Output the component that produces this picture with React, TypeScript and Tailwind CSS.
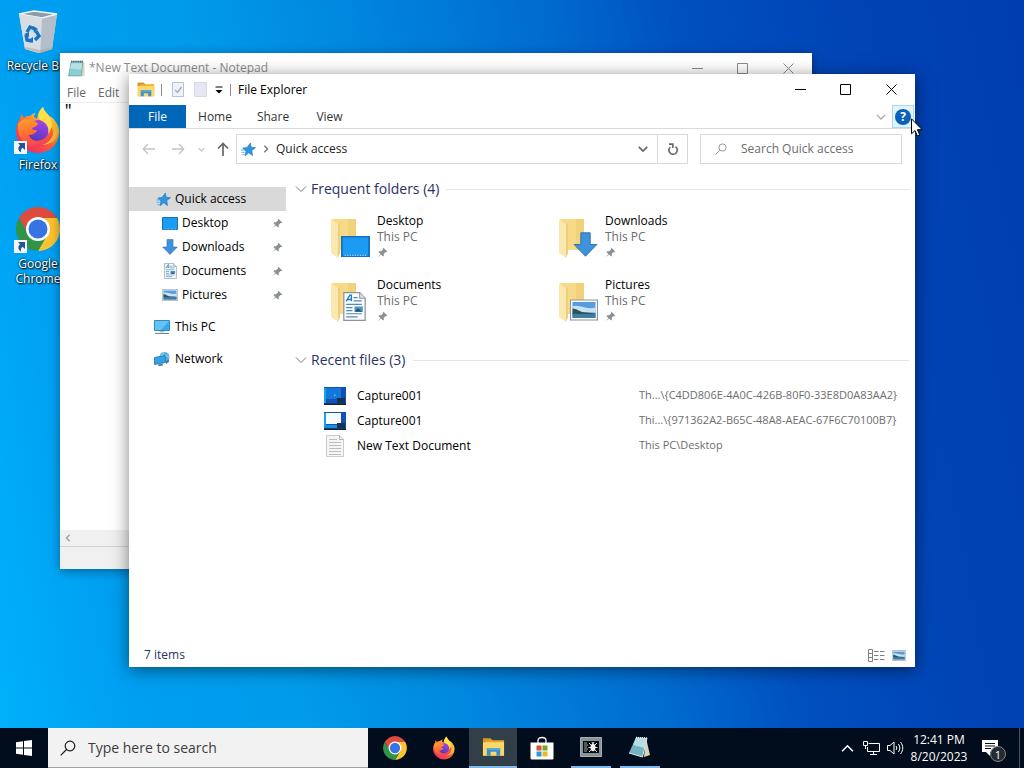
import type { ReactNode } from 'react'

type IconProps = { className?: string }

/* ---------- app icons ---------- */

function ChromeIcon({ className }: IconProps) {
  return (
    <svg viewBox="0 0 48 48" className={className} aria-hidden="true">
      <path d="M24 13H43.05A22 22 0 0 0 4.95 13L14.47 29.5A11 11 0 0 1 24 13Z" fill="#dd4b3e" />
      <path
        d="M24 13H43.05A22 22 0 0 0 4.95 13L14.47 29.5A11 11 0 0 1 24 13Z"
        fill="#fbc32d"
        transform="rotate(120 24 24)"
      />
      <path
        d="M24 13H43.05A22 22 0 0 0 4.95 13L14.47 29.5A11 11 0 0 1 24 13Z"
        fill="#2f9448"
        transform="rotate(240 24 24)"
      />
      <circle cx="24" cy="24" r="12" fill="#fff" />
      <circle cx="24" cy="24" r="9.5" fill="#3574e2" />
    </svg>
  )
}

function FirefoxIcon({ className }: IconProps) {
  return (
    <svg viewBox="0 0 48 48" className={className} aria-hidden="true">
      <defs>
        <linearGradient id="fx-body" x1="0.85" y1="0.05" x2="0.2" y2="0.95">
          <stop offset="0" stopColor="#fff04a" />
          <stop offset="0.3" stopColor="#ffb32b" />
          <stop offset="0.6" stopColor="#ff5a36" />
          <stop offset="1" stopColor="#ee2a68" />
        </linearGradient>
        <linearGradient id="fx-flame" x1="0.3" y1="0" x2="0.6" y2="1">
          <stop offset="0" stopColor="#ff9a2c" />
          <stop offset="0.5" stopColor="#ff6a34" />
          <stop offset="1" stopColor="#f23a5c" />
        </linearGradient>
        <linearGradient id="fx-globe" x1="0.7" y1="0" x2="0.3" y2="1">
          <stop offset="0" stopColor="#a844e8" />
          <stop offset="1" stopColor="#5138b8" />
        </linearGradient>
      </defs>
      <path
        d="M29 1c1 4 4 6 6 9 3 1 5 3 6 5 3 4 5 8 4 13-1 11-10 19-21 19S3 38 2 27c0-6 1-10 4-14 0-2 1-4 2-5 0 2 1 3 2 4 2-2 4-2 6-2 2-2 4-3 6-3-2 2-2 3-2 4l3 2c1-6 3-9 6-12Z"
        fill="url(#fx-body)"
      />
      <circle cx="25" cy="25" r="11" fill="url(#fx-globe)" />
      <path
        d="M4 18c4-5 9-6 14-3 3 0 5 1 6 3-1 3-5 3-6 5 1 1 3 1 5 1-1 4-5 5-9 5 2 5 8 7 13 5 8-2 9-10 6-15-1-2-3-4-4-5 8 3 12 10 9 18-3 7-10 10-17 9C10 40 3 31 4 18Z"
        fill="url(#fx-flame)"
      />
      <path d="M35 11c5 6 7 13 3 20-2 4-6 7-10 8 8 0 15-5 16-13 1-6-3-12-9-15Z" fill="#ffbe34" />
      <path d="M29 1c-5 5-6 9-3 13 6 2 10 8 8 14 5-6 5-12 1-18-2-3-5-5-6-9Z" fill="#ffe047" />
    </svg>
  )
}

function RecycleBinIcon({ className }: IconProps) {
  return (
    <svg viewBox="0 0 48 48" className={className} aria-hidden="true">
      <path d="M5 7 20 4l23 3-5 35-14 4-13-4Z" fill="#d3d9df" />
      <path d="m28 10 15-3-5 35-12 4Z" fill="#b3bec8" />
      <path d="m5 7 15-3 23 3-15 4Z" fill="#8d9ba8" stroke="#f1f4f6" strokeWidth="1.4" />
      <path d="m5 7 23 4-2 35-15-4Z" fill="#d6dde3" />
      <path d="m12 40 14 3 13-3-1 2-12 4-15-4Z" fill="#bba997" opacity="0.6" />
      <g fill="none" stroke="#1873c4" strokeWidth="3.4">
        <path d="m13 25 3-5 5 2" />
        <path d="m22 24 3 5-4 4" />
        <path d="m18 34-5-1-1-5" />
      </g>
      <path d="m19 19 5 3-4 4ZM19 30v6l-4-3ZM10 27l5-2v5Z" fill="#1873c4" />
    </svg>
  )
}

function ShortcutBadge() {
  return (
    <svg viewBox="0 0 13 13" className="absolute bottom-0 left-0 size-[13px]" aria-hidden="true">
      <path d="M0 0h13v13H0Z" fill="#f4f6f8" />
      <path d="M4 2h7v7L8.500 6.700C7 8 6.500 9.500 7 11.500 4 9.500 3.500 7 6 4.200Z" fill="#22549a" />
    </svg>
  )
}

function NotepadIcon({ className }: IconProps) {
  return (
    <svg viewBox="0 0 16 16" className={className} aria-hidden="true">
      <path d="m13.500 2 2 .6V15l-2.500.500Z" fill="#d8d6c4" />
      <path d="M3 1.500h11L12.500 15H.5Z" fill="#8ccdd4" stroke="#5e9299" strokeWidth="0.600" />
      <path d="M3.300 3h10L12.600 9 2 8Z" fill="#b5e1e4" />
      <path d="M3.500.500v2M5.500.500v2M7.500.500v2M9.500.500v2M11.500.500v2M13.300.500v2" stroke="#40565c" strokeWidth="0.900" />
    </svg>
  )
}

function NotepadTaskIcon({ className }: IconProps) {
  return (
    <svg viewBox="0 0 24 24" className={className} aria-hidden="true">
      <path d="m18 3 4 17-6 2Z" fill="#d9d5bd" />
      <path d="M8 2.500 19 3l-4.500 19L1 18Z" fill="#75b3c2" />
      <path d="M8 2.500 19 3l-2.500 10L5 10Z" fill="#b8dde3" />
      <path d="m1 18 13.500 4L19 3" fill="none" stroke="#d7eaee" strokeWidth="1" />
      <path d="m8 2.500 11 .5" stroke="#e8eef0" strokeWidth="1.500" strokeDasharray="1 1" />
    </svg>
  )
}

function ExplorerIcon({ className }: IconProps) {
  return (
    <svg viewBox="0 0 24 20" className={className} aria-hidden="true">
      <path d="M1 1h8l2 2h12v16H1Z" fill="#e3a92e" />
      <path d="M1 5h22v14H1Z" fill="#fbd967" />
      <path d="M1 1h8l1.500 2H4v2H1Z" fill="#d5922d" />
      <path d="M5 11h14v8h-4v-4H9v4H5Z" fill="#3f8fce" />
      <path d="M5 11h14v2H5Z" fill="#5ba8df" />
    </svg>
  )
}

function StoreIcon({ className }: IconProps) {
  return (
    <svg viewBox="0 0 24 24" className={className} aria-hidden="true">
      <path d="M8 7V4.500C8 2.500 9.500 1.500 12 1.500s4 1 4 3V7" fill="none" stroke="#fff" strokeWidth="1.300" />
      <path d="M.5 6.500h23V22c0 1-.5 1.500-1.500 1.500H2C1 23.500.5 23 .5 22Z" fill="#fff" />
      <path d="M6.500 9.500h5v5h-5Z" fill="#d9532c" />
      <path d="M12.500 9.500h5v5h-5Z" fill="#7ba42b" />
      <path d="M6.500 15.500h5v5h-5Z" fill="#2a9ad8" />
      <path d="M12.500 15.500h5v5h-5Z" fill="#f2b52a" />
    </svg>
  )
}

function CaptureAppIcon({ className }: IconProps) {
  return (
    <svg viewBox="0 0 22 20" className={className} aria-hidden="true">
      <path d="M.5.500h21v19H.5Z" fill="#89939a" stroke="#a4adb2" />
      <path d="M3 4h16v12H3Z" fill="#070b0e" />
      <path d="M4 6h3M4 8h4M4 10h3M4 12h4M4 14h3" stroke="#c2c8cb" strokeWidth="0.800" />
      <ellipse cx="13" cy="10.500" rx="2.500" ry="3.700" fill="#f2f4f5" />
      <path d="m9 6 2 2m6-2-2 2M8.500 10.500h9M9 15l2-2m6 2-2-2M12 5l1 2 1-2" fill="none" stroke="#f2f4f5" strokeWidth="0.900" />
    </svg>
  )
}

/* ---------- explorer icons ---------- */

function StarIcon({ className }: IconProps) {
  return (
    <svg viewBox="0 0 16 16" className={className} aria-hidden="true">
      <path d="m10 1 .8 4.600 4.700.4-4 3 .8 5.500-4-3-4 3.200 1-4.700L2 6.500l4.500-.7Z" fill="#2e96e0" stroke="#1c78bd" strokeWidth="0.700" />
      <path d="M0 8.500h3.500M.500 11H4M1.500 13.500H4" stroke="#57afea" strokeWidth="1" />
    </svg>
  )
}

function DesktopIcon({ className }: IconProps) {
  return (
    <svg viewBox="0 0 16 13" preserveAspectRatio="none" className={className} aria-hidden="true">
      <path d="M.5.500h15v12H.5Z" fill="#1b9bf3" stroke="#1671ba" />
      <path d="M2 12h12" stroke="#9ad3fa" strokeWidth="0.800" strokeDasharray="0.700 0.700" />
    </svg>
  )
}

function DownloadIcon({ className }: IconProps) {
  return (
    <svg viewBox="0 0 16 16" className={className} aria-hidden="true">
      <path d="M5 .5h6V8h4.300L8 15.500.700 8H5Z" fill="#3e92dc" stroke="#2b70ae" strokeWidth="0.600" />
    </svg>
  )
}

function DocumentIcon({ className }: IconProps) {
  return (
    <svg viewBox="0 0 22 28" className={className} aria-hidden="true">
      <path d="M.700.700H16L21.300 6v21.300H.700Z" fill="#fcfdfe" stroke="#8b949c" strokeWidth="1.200" />
      <path d="M16 .7V6h5.300" fill="#dce2e7" stroke="#8b949c" />
      <path d="m3 9 3.500-6H8v6M4 7.200h4" fill="none" stroke="#1b7fbe" strokeWidth="1.300" />
      <path d="M10 5.500h4M10 8.500h8M3 12h15M3 15h6M3 18h6M3 21h15M3 24h11" stroke="#4a8bb9" strokeWidth="1.200" />
      <path d="M11 14h8v5h-8Z" fill="#4a94c8" />
      <path d="m11 19 3-3 5 3Z" fill="#244e63" />
    </svg>
  )
}

function PictureIcon({ className }: IconProps) {
  return (
    <svg viewBox="0 0 28 21" className={className} aria-hidden="true">
      <path d="M.5.500h27v20H.5Z" fill="#fff" stroke="#8395a6" strokeWidth="1.200" />
      <path d="M2.500 2.500h23v16h-23Z" fill="#589cdf" />
      <path d="M2.500 7c6-3 15 4 23 1v5h-23Z" fill="#c7e2f4" />
      <path d="M2.500 9c5 0 7 4 14 4l9 1v1h-23Z" fill="#29545e" />
      <path d="M2.500 14.500h23v4h-23Z" fill="#417da0" />
    </svg>
  )
}

function ThisPcIcon({ className }: IconProps) {
  return (
    <svg viewBox="0 0 16 15" className={className} aria-hidden="true">
      <path d="M.5.500h15v10H.5Z" fill="#35aaec" stroke="#3889b5" />
      <path d="M1 1h14L7 10H1Z" fill="#62c3f5" />
      <path d="M5.500 11h5v1.500h-5Z" fill="#b8c3ca" />
      <path d="M1 13.500h14" stroke="#728791" />
    </svg>
  )
}

function NetworkIcon({ className }: IconProps) {
  return (
    <svg viewBox="0 0 16 16" className={className} aria-hidden="true">
      <circle cx="10.500" cy="6" r="5" fill="#5aaedd" />
      <path d="M6 5c3-1 6-1 9 1M10 1c-2 3-2 7 1 10" fill="none" stroke="#a5dbf5" strokeWidth="0.800" />
      <path d="m.5 6.500 10.500-2 .5 7-11 2Z" fill="#35a3e3" stroke="#23719f" strokeWidth="0.800" />
      <path d="m4 13.500.5 1.800 4.500-.8-.5-1.800ZM12 10l3-2v3l-3 2Z" fill="#4183a8" />
    </svg>
  )
}

function PinIcon({ className }: IconProps) {
  return (
    <svg viewBox="0 0 12 12" className={className} aria-hidden="true">
      <path d="m7 .8 4.200 4.200-1.100.7-.8-.3-2 2.200.2 1.900-.9.900L4.300 8.200.8 11.200 3.700 7.700 1.500 5.400l1-.9 1.900.2 2.200-2-.3-.8Z" fill="#8a9196" />
    </svg>
  )
}

function FolderBack() {
  return (
    <svg viewBox="0 0 28 42" className="h-[42px] w-[28px]" aria-hidden="true">
      <path d="M2 2h24v31H7Z" fill="#f6da88" />
      <path d="M18 2h8v31h-8Z" fill="#f1d27a" />
      <path d="m1 2 7 5v34l-7-5Z" fill="#fbe8ad" />
      <path d="m8 7 2-.5V36l-2 5Z" fill="#ecce7c" />
    </svg>
  )
}

function TextFileIcon() {
  return (
    <svg viewBox="0 0 18 22" className="h-[22px] w-[18px]" aria-hidden="true">
      <path d="M.5.500h13l4 4v17H.5Z" fill="#f5f5f5" stroke="#cbcbcb" />
      <path d="M13.500.500v4h4" fill="none" stroke="#b5b5b5" />
      <path d="M3 4.500h8M3 7.500h12M3 10.500h12M3 13.500h12M3 16.500h12M3 19.500h12" stroke="#bdbdbd" />
    </svg>
  )
}

function CaptureThumb({ filled }: { filled: boolean }) {
  return (
    <svg viewBox="0 0 22 18" className="h-[18px] w-[22px]" aria-hidden="true">
      <path d="M0 0h22v18H0Z" fill="#1150b4" />
      <path d="M0 1h2v15H0Z" fill="#13a3ef" />
      <path d="M2 1h15v11H2Z" fill={filled ? '#1478db' : '#f7fbff'} />
      {filled ? <path d="M10 7.500h1.500v1.500H10Z" fill="#67c5f8" /> : <path d="M0 13h14v3H0Z" fill="#1593d9" />}
      <path d="M13 11h8v5h-8Z" fill="#17314e" />
      <path d="M0 16.500h22V18H0Z" fill="#10233a" />
    </svg>
  )
}

/* ---------- small glyphs ---------- */

function Chevron({ className }: IconProps) {
  return (
    <svg viewBox="0 0 12 12" className={className} fill="none" stroke="currentColor" aria-hidden="true">
      <path d="m1 3.500 5 5 5-5" />
    </svg>
  )
}

function Magnifier({ className }: IconProps) {
  return (
    <svg viewBox="0 0 16 16" className={className} fill="none" stroke="currentColor" strokeWidth="1.200" aria-hidden="true">
      <circle cx="10" cy="6" r="4.800" />
      <path d="M6.500 9.500.700 15.300" />
    </svg>
  )
}

function WindowControls() {
  return (
    <div className="flex h-full">
      <button aria-label="Minimize" className="flex w-[45px] items-center justify-center">
        <svg viewBox="0 0 11 11" className="size-[11px]" stroke="currentColor" aria-hidden="true">
          <path d="M0 5.500h11" />
        </svg>
      </button>
      <button aria-label="Maximize" className="flex w-[45px] items-center justify-center">
        <svg viewBox="0 0 11 11" className="size-[11px]" fill="none" stroke="currentColor" aria-hidden="true">
          <path d="M.5.500h10v10H.5Z" />
        </svg>
      </button>
      <button aria-label="Close" className="flex w-[47px] items-center justify-center">
        <svg viewBox="0 0 11 11" className="size-[11px]" stroke="currentColor" aria-hidden="true">
          <path d="m.5.500 10 10M10.500.500l-10 10" />
        </svg>
      </button>
    </div>
  )
}

/* ---------- desktop ---------- */

function DesktopShortcut({ label, icon, shortcut = true }: { label: string; icon: ReactNode; shortcut?: boolean }) {
  return (
    <button className="flex h-[99px] w-full flex-col items-center text-xs leading-[15px] text-white [text-shadow:1px_1px_2px_#000,0_0_2px_#000]">
      <span className="relative mb-[3px] block size-12">
        {icon}
        {shortcut && <ShortcutBadge />}
      </span>
      <span className="w-full">{label}</span>
    </button>
  )
}

function NotepadWindow() {
  return (
    <section
      aria-label="Notepad"
      className="absolute left-[60px] top-[53px] flex h-[516px] w-[752px] flex-col bg-white text-xs shadow-[0_2px_10px_rgba(0,0,0,0.4)]"
    >
      <header className="flex h-[30px] items-center pl-2 text-[#8b8b8b]">
        <NotepadIcon className="mr-1 size-[17px]" />
        <h2 className="flex-1">*New Text Document - Notepad</h2>
        <WindowControls />
      </header>
      <nav className="flex h-5 items-center gap-3 border-b border-[#ececec] px-[7px] text-[#666]">
        <button>File</button>
        <button>Edit</button>
      </nav>
      <textarea
        aria-label="Document text"
        defaultValue={'"'}
        className="flex-1 resize-none px-1 font-['Liberation_Mono',monospace] text-sm leading-4 outline-none"
      />
      <div className="flex h-[17px] items-center border-b border-[#d2d2d2] bg-[#f0f0f0] pl-1 text-[#a0a0a0]">
        <Chevron className="size-2 rotate-90 stroke-2" />
      </div>
      <footer className="h-[22px] bg-[#f0f0f0]" />
    </section>
  )
}

/* ---------- file explorer ---------- */

const quickLinks = [
  { name: 'Desktop', icon: <DesktopIcon className="h-[13px] w-4" /> },
  { name: 'Downloads', icon: <DownloadIcon className="size-4" /> },
  { name: 'Documents', icon: <DocumentIcon className="h-4 w-[13px]" /> },
  { name: 'Pictures', icon: <PictureIcon className="h-3 w-4" /> },
]

const folders = [
  { name: 'Desktop', overlay: <DesktopIcon className="h-[21px] w-[29px]" /> },
  { name: 'Downloads', overlay: <DownloadIcon className="size-[25px]" /> },
  { name: 'Documents', overlay: <DocumentIcon className="mr-1 h-[29px] w-[23px]" /> },
  { name: 'Pictures', overlay: <PictureIcon className="h-[22px] w-7" /> },
]

const recentFiles = [
  {
    name: 'Capture001',
    path: 'Th...\\{C4DD806E-4A0C-426B-80F0-33E8D0A83AA2}',
    icon: <CaptureThumb filled />,
  },
  {
    name: 'Capture001',
    path: 'Thi...\\{971362A2-B65C-48A8-AEAC-67F6C70100B7}',
    icon: <CaptureThumb filled={false} />,
  },
  { name: 'New Text Document', path: 'This PC\\Desktop', icon: <TextFileIcon /> },
]

function Ribbon() {
  return (
    <>
      <header className="flex h-[31px] items-center pl-2">
        <ExplorerIcon className="h-[15px] w-[18px]" />
        <span className="mx-[6px] h-3 w-px bg-[#8a8a8a]" />
        <button aria-label="Properties" className="ml-1">
          <svg viewBox="0 0 12 15" className="h-[15px] w-3" aria-hidden="true">
            <path d="M.5.500h11v14H.5Z" fill="#eef2fa" stroke="#b9c1d2" />
            <path d="m3 8 2.500 2.500L9.500 5" fill="none" stroke="#9dabc5" strokeWidth="1.400" />
          </svg>
        </button>
        <button aria-label="New folder" className="ml-[10px]">
          <svg viewBox="0 0 13 15" className="h-[15px] w-[13px]" aria-hidden="true">
            <path d="M.5.500h12v14H.5Z" fill="#e3e8f3" stroke="#d3dae8" />
          </svg>
        </button>
        <button aria-label="Customize Quick Access Toolbar" className="ml-2">
          <svg viewBox="0 0 8 8" className="size-2" aria-hidden="true">
            <path d="M.5 1h7" stroke="#000" />
            <path d="M.500 4h7L4 7.500Z" />
          </svg>
        </button>
        <span className="mx-[7px] h-3 w-px bg-[#8a8a8a]" />
        <h1 className="flex-1">File Explorer</h1>
        <WindowControls />
      </header>

      <nav className="flex h-6 items-stretch border-b border-[#dadbdc] text-[#333]">
        <button className="w-[57px] bg-[#0067b8] text-white">File</button>
        <button className="w-[58px]">Home</button>
        <button className="w-[58px]">Share</button>
        <button className="w-[55px]">View</button>
        <button aria-label="Expand the Ribbon" className="ml-auto mr-[6px] text-[#a3a3a3]">
          <Chevron className="size-[10px] stroke-[1.500]" />
        </button>
        <button
          aria-label="Help"
          className="mr-px flex w-[22px] items-center justify-center border border-[#a9d9f2] bg-[#e2f3fc]"
        >
          <span className="flex size-4 items-center justify-center rounded-full bg-[#0a62b8] font-bold leading-none text-white">
            ?
          </span>
        </button>
      </nav>
    </>
  )
}

function AddressRow() {
  return (
    <div className="flex h-10 items-center pl-[13px] pr-[13px] text-[#222]">
      <button aria-label="Back" className="text-[#c4c4c4]">
        <svg viewBox="0 0 14 12" className="h-3 w-[14px]" fill="none" stroke="currentColor" strokeWidth="1.300" aria-hidden="true">
          <path d="M13 6H1.500M6 1 1.200 6 6 11" />
        </svg>
      </button>
      <button aria-label="Forward" className="ml-[15px] text-[#c4c4c4]">
        <svg viewBox="0 0 14 12" className="h-3 w-[14px]" fill="none" stroke="currentColor" strokeWidth="1.300" aria-hidden="true">
          <path d="M1 6h11.500M8 1l4.800 5L8 11" />
        </svg>
      </button>
      <button aria-label="Recent locations" className="ml-[13px] text-[#c4c4c4]">
        <Chevron className="size-[7px] stroke-2" />
      </button>
      <button aria-label="Up" className="ml-3 text-[#666]">
        <svg viewBox="0 0 12 14" className="h-[14px] w-3" fill="none" stroke="currentColor" strokeWidth="1.700" aria-hidden="true">
          <path d="M6 14V2M1 6.500 6 1.500l5 5" />
        </svg>
      </button>
      <div className="ml-[7px] flex h-[30px] flex-1 items-stretch border border-[#d9d9d9]">
        <div className="flex flex-1 items-center pl-1">
          <StarIcon className="size-[15px]" />
          <Chevron className="mx-[6px] size-2 -rotate-90 stroke-2 text-[#777]" />
          <button>Quick access</button>
          <button aria-label="Previous locations" className="ml-auto mr-[9px] text-[#666]">
            <Chevron className="size-[10px] stroke-2" />
          </button>
        </div>
        <button
          aria-label="Refresh"
          className="flex w-[30px] items-center justify-center border-l border-[#d9d9d9] text-[#6a6a6a]"
        >
          <svg viewBox="0 0 12 13" className="h-[13px] w-3" fill="none" stroke="currentColor" strokeWidth="1.700" aria-hidden="true">
            <path d="M8.500 3.600A4.200 4.200 0 1 1 3.200 4" />
            <path d="M2 1.200h3.800V5" />
          </svg>
        </button>
      </div>
      <label className="ml-3 flex h-[30px] w-[202px] items-center border border-[#d9d9d9] pl-[14px] text-[#8a8a8a]">
        <Magnifier className="mr-[14px] size-3 shrink-0" />
        <input
          type="search"
          aria-label="Search Quick access"
          placeholder="Search Quick access"
          className="w-full min-w-0 outline-none placeholder:text-[#6d6d6d]"
        />
      </label>
    </div>
  )
}

function Sidebar() {
  return (
    <aside className="w-[157px] shrink-0 pt-[18px] text-black">
      <a href="#quick-access" className="flex h-6 items-center gap-1 bg-[#d9d9d9] pl-[27px]">
        <StarIcon className="size-[15px]" />
        Quick access
      </a>
      <ul>
        {quickLinks.map(({ name, icon }) => (
          <li key={name}>
            <a href={`#${name}`} className="flex h-6 items-center pl-[33px] pr-[3px]">
              <span className="mr-1 flex w-4 justify-center">{icon}</span>
              <span className="flex-1">{name}</span>
              <PinIcon className="size-[11px]" />
            </a>
          </li>
        ))}
      </ul>
      <a href="#this-pc" className="mt-2 flex h-6 items-center gap-[5px] pl-[25px]">
        <ThisPcIcon className="h-[15px] w-4" />
        This PC
      </a>
      <a href="#network" className="mt-2 flex h-6 items-center gap-[5px] pl-[25px]">
        <NetworkIcon className="size-4" />
        Network
      </a>
    </aside>
  )
}

function GroupHeading({ children }: { children: ReactNode }) {
  return (
    <h2 className="flex h-6 items-center text-sm text-[#2a3265]">
      <button className="flex items-center gap-1">
        <Chevron className="size-3 text-[#777]" />
        {children}
      </button>
      <span className="ml-[7px] h-px flex-1 bg-[#e5e5e5]" />
    </h2>
  )
}

function ExplorerWindow() {
  return (
    <section
      aria-label="File Explorer"
      className="absolute left-[129px] top-[74px] flex h-[593px] w-[786px] flex-col bg-white text-xs text-black shadow-[0_3px_16px_rgba(0,0,0,0.5)]"
    >
      <Ribbon />
      <AddressRow />
      <div className="flex min-h-0 flex-1">
        <Sidebar />
        <main className="min-w-0 flex-1 pl-[9px] pr-[6px] pt-2">
          <GroupHeading>Frequent folders (4)</GroupHeading>
          <ul className="grid grid-cols-[228px_228px] pl-[35px] pt-2">
            {folders.map(({ name, overlay }) => (
              <li key={name} className="h-16 pt-2">
                <button className="flex gap-[5px] text-left leading-4">
                  <span className="relative block h-11 w-[42px]">
                    <FolderBack />
                    <span className="absolute bottom-1 right-[2px]">{overlay}</span>
                  </span>
                  <span className="-mt-1 block">
                    <span className="block">{name}</span>
                    <span className="block text-[#6d6d6d]">This PC</span>
                    <PinIcon className="mt-[2px] size-[11px]" />
                  </span>
                </button>
              </li>
            ))}
          </ul>
          <div className="mt-[11px]">
            <GroupHeading>Recent files (3)</GroupHeading>
            <table className="mt-[11px] w-full table-fixed">
              <tbody>
                {recentFiles.map(({ name, path, icon }) => (
                  <tr key={path} className="h-[25px]">
                    <td className="w-[62px] p-0 pl-[29px]">
                      <span className="flex w-[22px] justify-center">{icon}</span>
                    </td>
                    <td className="p-0">{name}</td>
                    <td className="w-[270px] whitespace-nowrap p-0 text-[11px] text-[#6d6d6d]">{path}</td>
                  </tr>
                ))}
              </tbody>
            </table>
          </div>
        </main>
      </div>
      <footer className="flex h-6 items-center pl-[15px] pr-[9px] text-[#2a3265]">
        <span className="flex-1">7 items</span>
        <button aria-label="Details view" className="mr-[7px]">
          <svg viewBox="0 0 17 13" className="h-[13px] w-[17px]" fill="none" stroke="#7f7f7f" aria-hidden="true">
            <path d="M.5.500h4v12h-4ZM.5 4.500h4M.5 8.500h4" />
            <path d="M6 2.500h4.500M12 2.500h4.500M6 6.500h4.500M12 6.500h4.500M6 10.500h4.500M12 10.500h4.500" />
          </svg>
        </button>
        <button aria-label="Large icons view">
          <PictureIcon className="h-[11px] w-[14px]" />
        </button>
      </footer>
    </section>
  )
}

/* ---------- taskbar ---------- */

const taskButtons = [
  { name: 'Google Chrome', icon: <ChromeIcon className="size-[26px]" />, state: 'pinned' },
  { name: 'Firefox', icon: <FirefoxIcon className="size-6" />, state: 'pinned' },
  { name: 'File Explorer', icon: <ExplorerIcon className="h-5 w-[23px]" />, state: 'active' },
  { name: 'Microsoft Store', icon: <StoreIcon className="size-6" />, state: 'pinned' },
  { name: 'Capture', icon: <CaptureAppIcon className="h-5 w-[22px]" />, state: 'open' },
  { name: 'Notepad', icon: <NotepadTaskIcon className="size-6" />, state: 'open' },
]

function Taskbar() {
  return (
    <footer className="flex h-10 shrink-0 items-stretch bg-[#010c1c] text-white">
      <button aria-label="Start" className="flex w-12 items-center justify-center">
        <svg viewBox="0 0 16 16" className="size-4" fill="#fff" aria-hidden="true">
          <path d="M0 2.300 7 1.300v6.200H0ZM8 1.100 16 0v7.500H8ZM0 8.500h7v6.200l-7-1ZM8 8.500h8V16l-8-1.100Z" />
        </svg>
      </button>
      <label className="flex w-80 items-center border-b border-[#9aa3a8] bg-[#f2f2f2] pl-3 text-[#1c1c1c]">
        <Magnifier className="mr-3 size-4 shrink-0" />
        <input
          type="search"
          aria-label="Type here to search"
          placeholder="Type here to search"
          className="w-full text-sm outline-none placeholder:text-[#3c3c3c]"
        />
      </label>
      <nav className="ml-[3px] flex gap-px">
        {taskButtons.map(({ name, icon, state }) => (
          <button
            key={name}
            aria-label={name}
            className={
              state === 'active'
                ? 'flex w-12 flex-col items-center bg-[#323e48]'
                : 'flex w-12 flex-col items-center'
            }
          >
            <span className="flex flex-1 items-center">{icon}</span>
            {state === 'active' && <span className="h-[2px] w-full bg-[#7db9ea]" />}
            {state === 'open' && <span className="h-[2px] w-10 bg-[#7db9ea]" />}
          </button>
        ))}
      </nav>
      <div className="ml-auto flex items-center">
        <button aria-label="Show hidden icons">
          <Chevron className="size-[13px] rotate-180 stroke-[1.500]" />
        </button>
        <button aria-label="Network" className="ml-[9px]">
          <svg viewBox="0 0 17 15" className="h-[15px] w-[17px]" fill="none" stroke="#fff" aria-hidden="true">
            <path d="M5.500 2.500h11v8h-12V6M.5.500h4v4h-4ZM2.500 4.500V8M10.500 10.500v3M7 13.500h7" />
          </svg>
        </button>
        <button aria-label="Volume" className="ml-[7px]">
          <svg viewBox="0 0 17 14" className="h-[14px] w-[17px]" fill="none" stroke="#fff" aria-hidden="true">
            <path d="M.5 4.500H3l4-3.500v12L3 9.500H.5Z" />
            <path d="M9 5c1 1.300 1 2.700 0 4M11.300 3c2 2.500 2 5.500 0 8M13.500 1c3 3.800 3 8.200 0 12" />
          </svg>
        </button>
        <button className="w-[70px] text-center text-xs leading-[17px]">
          <time dateTime="2023-08-20T12:41">
            12:41 PM
            <br />
            8/20/2023
          </time>
        </button>
        <button aria-label="1 new notification" className="relative ml-2 mr-[13px] h-6 w-6">
          <svg viewBox="0 0 16 16" className="size-4" aria-hidden="true">
            <path d="M0 0h16v12H8v4l-4-4H0Z" fill="#fff" />
            <path d="M3 3.500h10M3 6h10M3 8.500h6" stroke="#010c1c" />
          </svg>
          <span className="absolute bottom-[-2px] right-0 flex size-4 items-center justify-center rounded-full border border-[#7d848c] bg-[#252b33] text-[11px] leading-none">
            1
          </span>
        </button>
        <button aria-label="Show desktop" className="h-10 w-[5px] border-l border-[#4b5560]" />
      </div>
    </footer>
  )
}

export default function App() {
  return (
    <div className="flex h-screen flex-col overflow-hidden bg-[linear-gradient(80deg,#00b2fa_0%,#009ff2_12%,#009bea_27%,#0086de_42%,#006cd0_58%,#0050c0_70%,#0042b4_87%,#003eb0_100%)] font-['Open_Sans','Noto_Sans',sans-serif]">
      <div className="relative min-h-0 flex-1">
        <div className="flex w-[76px] flex-col pt-[7px]">
          <DesktopShortcut label="Recycle Bin" icon={<RecycleBinIcon className="size-12" />} shortcut={false} />
          <DesktopShortcut label="Firefox" icon={<FirefoxIcon className="size-12" />} />
          <DesktopShortcut label="Google Chrome" icon={<ChromeIcon className="size-12" />} />
        </div>
        <NotepadWindow />
        <ExplorerWindow />
        <svg viewBox="0 0 12 19" className="absolute left-[911px] top-[118px] h-[19px] w-3" aria-hidden="true">
          <path d="M.5.800v15l3.500-3.200 2.400 5.400 2.400-1-2.400-5.300h4.800Z" fill="#fff" stroke="#000" />
        </svg>
      </div>
      <Taskbar />
    </div>
  )
}
